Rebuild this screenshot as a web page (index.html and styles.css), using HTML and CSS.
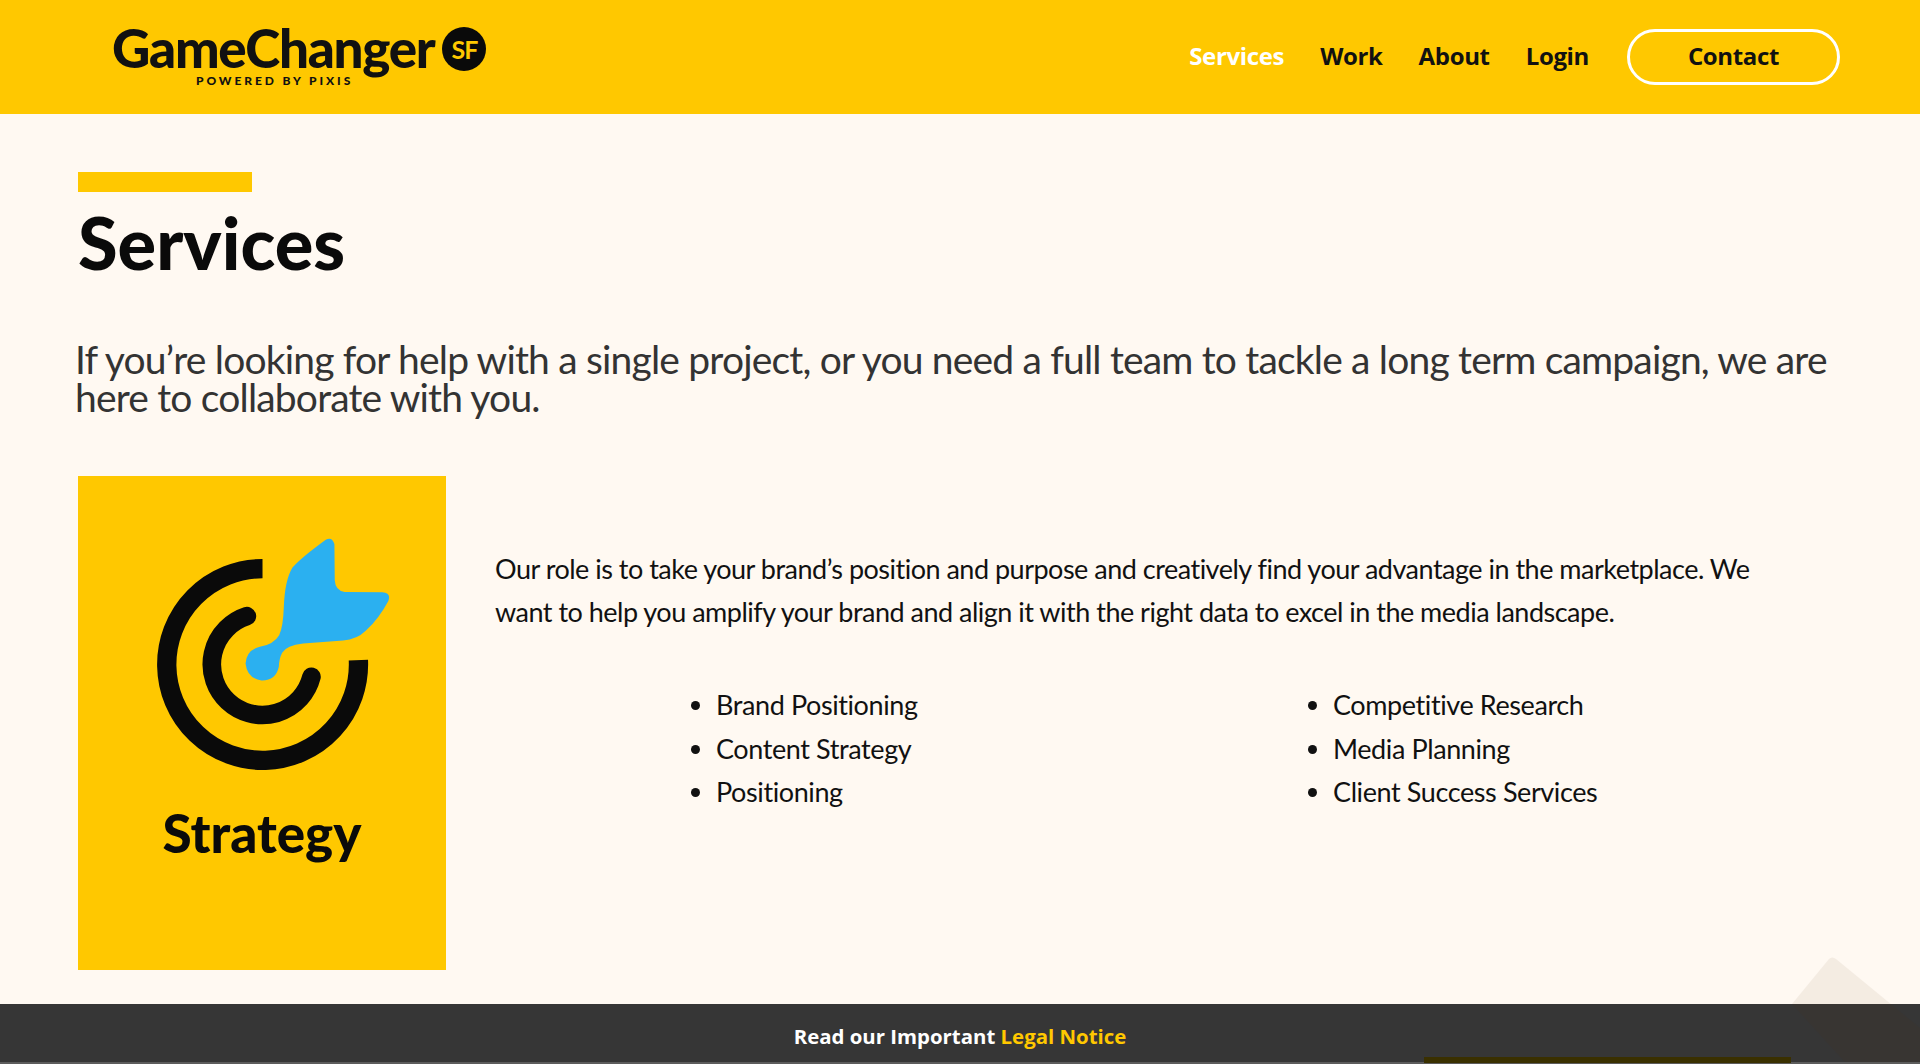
FILE: index.html
```html
<!DOCTYPE html>
<html lang="en">
<head>
    <meta charset="UTF-8">
    <meta name="viewport" content="width=device-width, initial-scale=1.0">
    <title>GameChanger SF - Services</title>
    <link rel="stylesheet" href="styles.css">
</head>
<body>

    <header class="site-header">
        <a class="logo" href="#">
            <span class="logo-top">
                <span class="logo-name">GameChanger</span>
                <span class="logo-badge">SF</span>
            </span>
            <span class="logo-sub">POWERED BY PIXIS</span>
        </a>
        <nav class="main-nav">
            <a class="nav-link active" href="#">Services</a>
            <a class="nav-link" href="#">Work</a>
            <a class="nav-link" href="#">About</a>
            <a class="nav-link" href="#">Login</a>
            <a class="nav-contact" href="#">Contact</a>
        </nav>
    </header>

    <main class="content">
        <div class="accent-bar"></div>
        <h1 class="page-title">Services</h1>
        <p class="intro">If you’re looking for help with a single project, or you need a full team to tackle a long term campaign, we are here to collaborate with you.</p>

        <section class="service">
            <div class="service-card">
                <svg class="service-icon" viewBox="262 200 698 700" aria-hidden="true">
                    <path d="M578 295 A288 288 0 1 0 866 570" fill="none" stroke="#0a0a0a" stroke-width="58"/>
                    <path d="M531 438 A152 152 0 1 0 725 620" fill="none" stroke="#0a0a0a" stroke-width="56" stroke-linecap="round"/>
                    <path d="M768 208 Q788 198 794 222 L795 330 Q797 362 825 365 L938 366 Q965 368 956 392 Q928 445 888 482 Q862 508 820 511 L700 520 Q650 525 637 548 Q628 565 627 590 Q618 632 575 631 Q532 625 527 580 Q530 540 570 530 Q612 522 628 495 Q640 470 642 410 Q645 330 668 292 Q690 265 768 208 Z" fill="#2bb0f0"/>
                </svg>
                <h2 class="service-name">Strategy</h2>
            </div>
            <div class="service-body">
                <p class="service-text">Our role is to take your brand’s position and purpose and creatively find your advantage in the marketplace. We want to help you amplify your brand and align it with the right data to excel in the media landscape.</p>
                <div class="service-lists">
                    <ul class="service-list">
                        <li>Brand Positioning</li>
                        <li>Content Strategy</li>
                        <li>Positioning</li>
                    </ul>
                    <ul class="service-list">
                        <li>Competitive Research</li>
                        <li>Media Planning</li>
                        <li>Client Success Services</li>
                    </ul>
                </div>
            </div>
        </section>
    </main>

    <footer class="legal">
        <span>Read our Important <a href="#">Legal Notice</a></span>
        <div class="legal-bar"></div>
    </footer>

    <!-- faded back to top shape in the corner -->
    <svg class="to-top" viewBox="0 0 140 110" aria-hidden="true">
        <path d="M2 48 L39 3 Q42 0 46 3 L130 72 L130 106 L55 106 Z" fill="#5a2c00"/>
    </svg>

</body>
</html>
```

FILE: styles.css
```css
* {
    box-sizing: border-box;
}

html, body {
    margin: 0;
    height: 100%;
}

body {
    display: flex;
    flex-direction: column;
    height: 1064px;
    overflow: hidden;
    position: relative;
    background-color: #fff9f2;
    font-family: Lato, "Open Sans", sans-serif;
    color: #111;
}

a {
    text-decoration: none;
    color: inherit;
}

/* header */
.site-header {
    height: 114px;
    flex: none;
    display: flex;
    justify-content: space-between;
    align-items: center;
    padding: 0 80px 0 112px;
    background-color: #ffc800;
}

.logo {
    display: flex;
    flex-direction: column;
    color: #111;
    margin-top: -4px;
}

.logo-top {
    display: flex;
    align-items: center;
    gap: 8px;
    height: 50px;
}

.logo-name {
    font-size: 53px;
    font-weight: 900;
    letter-spacing: -1.3px;
    line-height: 50px;
}

.logo-badge {
    width: 44px;
    height: 44px;
    margin-top: 2px;
    border-radius: 50%;
    background-color: #0a0a0a;
    color: #ffc800;
    display: flex;
    align-items: center;
    justify-content: center;
    font-size: 25px;
    font-weight: 700;
    letter-spacing: -1px;
}

.logo-sub {
    margin: 1px 0 0 84px;
    font-size: 12px;
    font-weight: 900;
    letter-spacing: 2.9px;
    line-height: 14px;
}

.main-nav {
    display: flex;
    align-items: center;
    font-family: "Open Sans", sans-serif;
    font-size: 24px;
    font-weight: 700;
    letter-spacing: -0.35px;
    color: #111;
}

.nav-link {
    margin-right: 36px;
    padding-bottom: 3px;
}

.nav-link.active {
    color: #fff;
}

.nav-contact {
    width: 213px;
    height: 56px;
    margin-left: 2px;
    padding-bottom: 3px;
    display: flex;
    align-items: center;
    justify-content: center;
    border: 3px solid #fff;
    border-radius: 28px;
}

/* page content */
.content {
    flex: 1;
    padding: 58px 78px 0;
}

.accent-bar {
    width: 174px;
    height: 20px;
    background-color: #ffc800;
}

.page-title {
    margin: 10px 0 0;
    font-size: 72px;
    font-weight: 900;
    line-height: 80px;
    color: #0a0a0a;
}

.intro {
    margin: 58px 0 0 -3px;
    font-size: 39px;
    letter-spacing: -0.82px;
    line-height: 38px;
    color: #333;
    width: 1770px;
}

.service {
    display: flex;
    margin-top: 60px;
}

.service-card {
    flex: none;
    width: 368px;
    height: 494px;
    padding: 61px 0 0 79px;
    background-color: #ffc800;
}

.service-icon {
    display: block;
    width: 233px;
    height: 233px;
}

.service-name {
    margin: 34px 0 0 -79px;
    font-size: 53px;
    font-weight: 900;
    line-height: 58px;
    text-align: center;
    color: #0a0a0a;
}

.service-body {
    flex: 1;
    padding: 71px 0 0 49px;
}

.service-text {
    margin: 0;
    width: 1290px;
    font-size: 27px;
    line-height: 43px;
    letter-spacing: -0.5px;
}

.service-lists {
    display: flex;
    margin-top: 50px;
}

.service-list {
    width: 617px;
    margin: 0;
    padding-left: 221px;
    font-size: 27px;
    line-height: 43.5px;
    letter-spacing: -0.4px;
}

/* legal strip */
.legal {
    flex: none;
    position: relative;
    height: 60px;
    display: flex;
    align-items: center;
    justify-content: center;
    padding-top: 6px;
    background-color: #363636;
    border-bottom: 2px solid #5c5c5c;
    font-family: "Open Sans", sans-serif;
    font-size: 20.4px;
    font-weight: 700;
    color: #fff;
}

.legal a {
    color: #ffc800;
}

.legal-bar {
    position: absolute;
    left: 1424px;
    bottom: -1px;
    width: 367px;
    height: 6px;
    background-color: #3a3000;
}

.to-top {
    position: absolute;
    left: 1790px;
    top: 956px;
    width: 140px;
    height: 110px;
    opacity: 0.06;
}
```
